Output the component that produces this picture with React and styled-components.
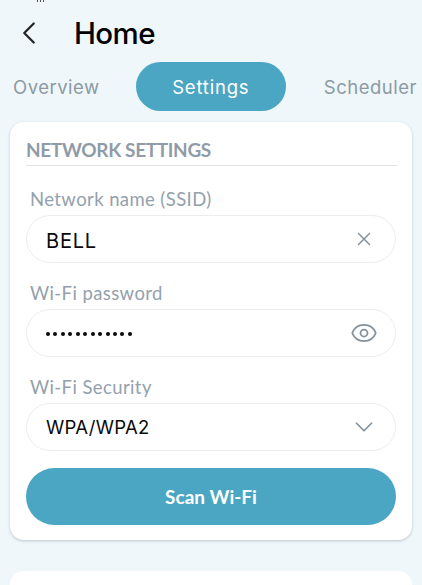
import React from "react";
import styled, { createGlobalStyle } from "styled-components";
import { ChevronLeft, X, Eye, ChevronDown } from "lucide-react";

const GlobalStyle = createGlobalStyle`
  html, body {
    margin: 0;
    padding: 0;
    height: 100%;
    overflow: hidden;
    background: #eff7fa;
  }
  * {
    box-sizing: border-box;
  }
`;

const Page = styled.div`
  width: 422px;
  height: 585px;
  overflow: hidden;
  display: flex;
  flex-direction: column;
  background: #eff7fa;
  font-family: "Lato", "Noto Sans", sans-serif;
`;

const StatusBar = styled.div`
  height: 11px;
  flex-shrink: 0;
  padding-left: 37px;
  display: flex;
  align-items: flex-start;
  gap: 2px;
`;

const StatusMark = styled.span`
  width: 1px;
  height: 2px;
  background: #555;
`;

const Header = styled.header`
  height: 44px;
  flex-shrink: 0;
  display: flex;
  align-items: center;
  padding-left: 10px;
  gap: 26px;
  color: #000;
`;

const Title = styled.h1`
  margin: 0;
  font-family: "Inter", sans-serif;
  font-size: 29.5px;
  font-weight: 500;
  letter-spacing: -0.6px;
`;

const Tabs = styled.nav`
  margin-top: 7px;
  height: 49px;
  flex-shrink: 0;
  display: flex;
  align-items: center;
  justify-content: space-between;
  padding: 0 5px 0 13px;
`;

const Tab = styled.div`
  font-family: "Inter", sans-serif;
  font-size: 18.5px;
  letter-spacing: 0.5px;
  color: #8c9aa4;
`;

const ActiveTab = styled(Tab)`
  width: 150px;
  height: 49px;
  margin-left: -2px;
  border-radius: 25px;
  background: #4aa6c3;
  display: flex;
  align-items: center;
  justify-content: center;
  letter-spacing: 0.8px;
  color: #fff;
`;

const Card = styled.section`
  margin: 11px 10px 0;
  height: 418px;
  flex-shrink: 0;
  padding: 15px 16px 0;
  background: #fff;
  border-radius: 14px;
  box-shadow: 0 1px 3px rgba(90, 110, 125, 0.35);
`;

const SectionTitle = styled.h2`
  margin: 0 -1px 0 0;
  height: 29px;
  padding-top: 1px;
  font-size: 19px;
  line-height: 24px;
  font-weight: 700;
  letter-spacing: -0.35px;
  color: #8f9ca8;
  border-bottom: 1px solid #dfe3e6;
`;

const Field = styled.div`
  margin-top: ${(props) => (props.$first ? "22px" : "19px")};
`;

const Label = styled.label`
  display: block;
  height: 22px;
  padding-left: 4px;
  font-size: 18.5px;
  line-height: 22px;
  letter-spacing: 0.4px;
  color: #93a1ac;
`;

const InputBox = styled.div`
  margin-top: 5px;
  height: 48px;
  display: flex;
  align-items: center;
  justify-content: space-between;
  padding: 0 16px 0 19px;
  border: 1px solid #ecedee;
  border-radius: 24px;
  font-family: "Inter", sans-serif;
  font-size: 18.5px;
  letter-spacing: 0.3px;
  color: #0a0a0a;
`;

const BigValue = styled.span`
  font-size: 20px;
  letter-spacing: 0.8px;
  padding-top: 3px;
`;

const IconSlot = styled.span`
  width: 30px;
  display: flex;
  align-items: center;
  justify-content: center;
  color: #84929d;
`;

const Dots = styled.span`
  display: flex;
  gap: 3.45px;
  padding-top: 1px;
`;

const Dot = styled.span`
  width: 4px;
  height: 4px;
  border-radius: 50%;
  background: #0a0a0a;
`;

const ScanButton = styled.button`
  display: block;
  width: 100%;
  height: 57px;
  margin-top: 17px;
  border: none;
  border-radius: 29px;
  background: #4aa6c3;
  color: #fff;
  font-family: "Lato", sans-serif;
  font-size: 19px;
  font-weight: 700;
`;

const NextCard = styled.section`
  margin: 31px 10px 0;
  height: 60px;
  flex-shrink: 0;
  background: #fff;
  border-radius: 14px;
`;

const App = () => (
  <Page>
    <GlobalStyle />
    <StatusBar>
      <StatusMark />
      <StatusMark />
      <StatusMark />
    </StatusBar>
    <Header>
      <ChevronLeft size={38} strokeWidth={1.4} color="#222" />
      <Title>Home</Title>
    </Header>
    <Tabs>
      <Tab>Overview</Tab>
      <ActiveTab>Settings</ActiveTab>
      <Tab>Scheduler</Tab>
    </Tabs>
    <Card>
      <SectionTitle>NETWORK SETTINGS</SectionTitle>
      <Field $first>
        <Label>Network name (SSID)</Label>
        <InputBox>
          <BigValue>BELL</BigValue>
          <IconSlot>
            <X size={22} strokeWidth={1.6} />
          </IconSlot>
        </InputBox>
      </Field>
      <Field>
        <Label>Wi-Fi password</Label>
        <InputBox>
          <Dots>
            {Array.from({ length: 12 }, (_, i) => (
              <Dot key={i} />
            ))}
          </Dots>
          <IconSlot>
            <Eye size={28} strokeWidth={1.5} />
          </IconSlot>
        </InputBox>
      </Field>
      <Field>
        <Label>Wi-Fi Security</Label>
        <InputBox>
          WPA/WPA2
          <IconSlot>
            <ChevronDown size={30} strokeWidth={1.4} />
          </IconSlot>
        </InputBox>
      </Field>
      <ScanButton>Scan Wi-Fi</ScanButton>
    </Card>
    <NextCard />
  </Page>
);

export default App;
